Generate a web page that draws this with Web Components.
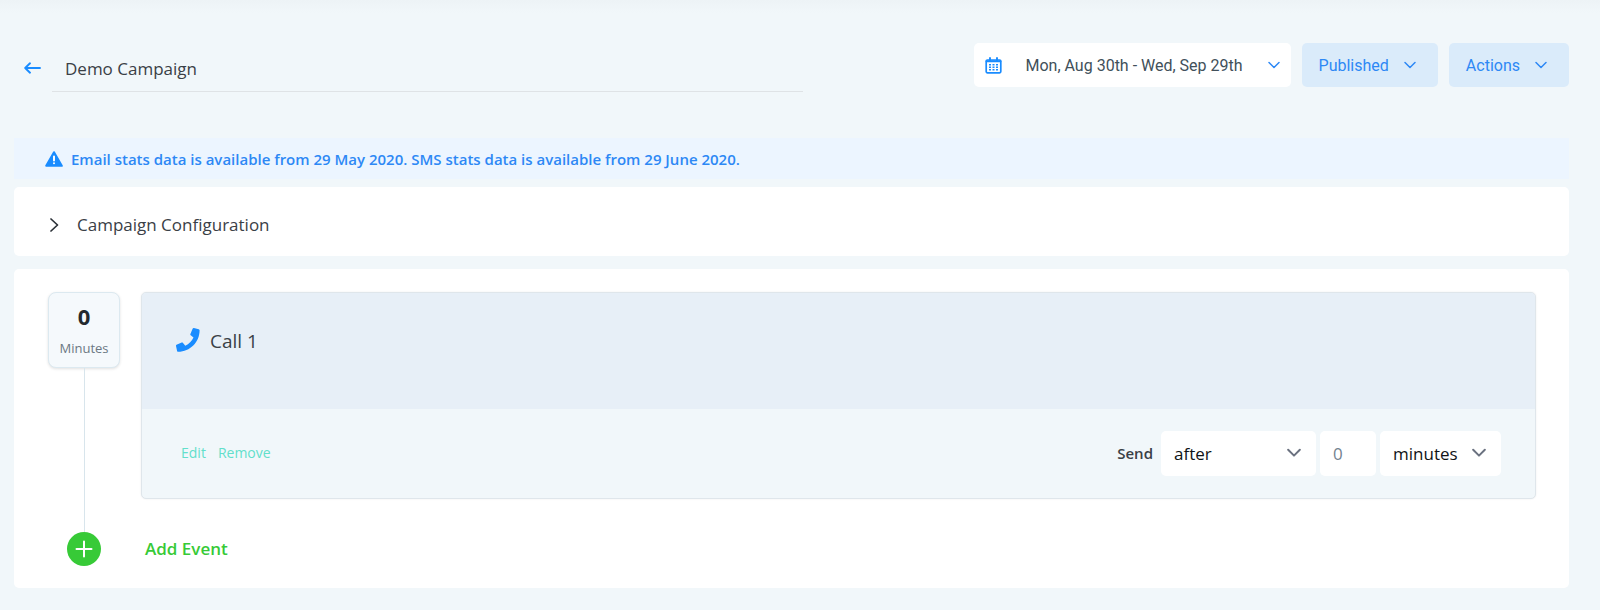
<!DOCTYPE html>
<html lang="en">
<head>
<meta charset="utf-8">
<meta name="viewport" content="width=device-width, initial-scale=1">
<title>Demo Campaign</title>
<style>
:root{--blue:#1a8cff;--blue-text:#2d88f5;--page:#f1f7fa;--ink:#3a4046;--green:#37ca37;--teal:#62dfcb;--ui:"Open Sans","Noto Sans",sans-serif;--roboto:Roboto,sans-serif}
html{background:var(--page)}
body{margin:0;font-family:var(--ui);color:var(--ink)}
</style>
</head>
<body>
<campaign-page>
  <campaign-header slot="header" name="Demo Campaign">
    <date-range>Mon, Aug 30th - Wed, Sep 29th</date-range>
    <menu-button>Published</menu-button>
    <menu-button>Actions</menu-button>
  </campaign-header>
  <info-alert>Email stats data is available from 29 May 2020. SMS stats data is available from 29 June 2020.</info-alert>
  <config-panel>Campaign Configuration</config-panel>
  <event-timeline>
    <delay-badge slot="delay" value="0">Minutes</delay-badge>
    <call-event>Call 1</call-event>
  </event-timeline>
</campaign-page>
<script>
const define = (name, html, setup) => customElements.define(name, class extends HTMLElement {
  constructor() {
    super();
    const t = document.createElement('template');
    t.innerHTML = `<style>:host,*{box-sizing:border-box}svg{display:block;flex:none;fill:none;stroke-linecap:round;stroke-linejoin:round}button,input,select{font:inherit;color:inherit;border:0;margin:0;padding:0;background:none}button{cursor:pointer}</style>${html}`;
    this.attachShadow({mode: 'open'}).append(t.content.cloneNode(true));
    if (setup) setup(this, this.shadowRoot);
  }
});

define('chevron-icon', `<style>:host{display:block;flex:none;width:12px}svg{width:100%;stroke-width:var(--chevron-stroke,1.5)}</style>
<svg viewBox="0 0 12 8" stroke="currentColor"><path d="M1 1.500 6 6.500 11 1.500"/></svg>`);

define('campaign-page', `<style>
:host{display:block;padding:0 31px 22px 14px;background:linear-gradient(#edf3f6,#f1f7fa 13px) no-repeat}
main{display:flex;flex-direction:column}
</style><slot name="header"></slot><main><slot></slot></main>`);

define('campaign-header', `<style>
:host{display:flex;justify-content:space-between;align-items:flex-start;padding:43px 0 46px}
.left{display:flex;align-items:center;flex:0 1 51%;padding-right:4px}
.back{display:block;width:38px;padding:0 10px}
.title{flex:1;min-width:0;height:49px;padding:2px 13px 0;border-bottom:1px solid #dfe3e6;font-size:17px;outline:0}
.actions{display:flex;gap:11px}
</style>
<div class="left">
<a class="back" href="#" aria-label="Back"><svg width="17" height="12" viewBox="0 0 17 12" stroke="#1a8cff" stroke-width="1.900"><path d="M16 6H1.500M6 1.300 1.200 6 6 10.700"/></svg></a>
<input class="title" aria-label="Campaign name">
</div>
<div class="actions"><slot></slot></div>`, (el, root) => {
  root.querySelector('.title').value = el.getAttribute('name');
});

define('date-range', `<style>
:host{display:block}
button{display:flex;align-items:center;height:44px;padding:0 11px;border-radius:5px;background:#fff;font-family:var(--roboto);font-size:16px;color:#41505a;white-space:nowrap}
.label{padding:0 25px 0 23px}
chevron-icon{color:var(--blue-text)}
</style>
<button type="button">
<svg width="17" height="17" viewBox="0 0 17 17"><rect x="1.200" y="3" width="14.600" height="12.800" rx="1.200" stroke="#1a8cff" stroke-width="1.700"/><path d="M1.500 4.200h14M5 1v3M12 1v3" stroke="#1a8cff" stroke-width="1.900"/><path d="M4 7.700h2M7.500 7.700h2M11 7.700h2M4 10.200h2M7.500 10.200h2M11 10.200h2M4 12.700h2M7.500 12.700h2M11 12.700h2" stroke="#1a8cff" stroke-width="1.400" stroke-linecap="butt"/></svg>
<span class="label"><slot></slot></span><chevron-icon></chevron-icon></button>`);

define('menu-button', `<style>
:host{display:block}
button{display:flex;align-items:center;gap:15px;height:44px;padding:0 22px 0 17px;border-radius:5px;background:#daebfa;font-family:var(--roboto);font-size:16px;color:var(--blue-text)}
</style><button type="button"><slot></slot><chevron-icon></chevron-icon></button>`);

define('info-alert', `<style>
:host{display:flex;align-items:center;gap:8px;min-height:41px;padding:0 31px;margin-bottom:8px;background:#ecf5ff;color:var(--blue-text);font-size:15px;line-height:20px;font-weight:600}
</style>
<svg width="18" height="16" viewBox="0 0 18 16"><path d="M9 1.200 16.800 14.800H1.200Z" fill="#1a8cff" stroke="#1a8cff" stroke-width="2"/><path d="M9 5.500v4M9 12.200v.1" stroke="#fff" stroke-width="2"/></svg>
<span><slot></slot></span>`);

define('config-panel', `<style>
:host{display:block;margin-bottom:13px;border-radius:5px;background:#fff}
button{display:flex;align-items:center;gap:18px;width:100%;min-height:69px;padding:6px 36px 0;font-size:17px;text-align:left}
</style>
<button type="button" aria-expanded="false"><svg width="9" height="14" viewBox="0 0 9 14" stroke="#2b3137" stroke-width="1.700"><path d="M1 1l6.500 6L1 13"/></svg><slot></slot></button>`);

define('event-timeline', `<style>
:host{display:grid;grid-template-columns:72px 1fr;column-gap:21px;padding:23px 33px 22px 34px;border-radius:5px;background:#fff}
.rail{display:flex;flex-direction:column;align-items:center}
.line{flex:1;width:1px;background:#d8e5ec}
.plus{display:grid;place-items:center;justify-self:center;width:34px;height:34px;border-radius:50%;background:var(--green)}
.text{justify-self:start;padding:0 4px;font-size:17px;line-height:24px;font-weight:600;color:var(--green)}
.body{padding-bottom:33px}
</style>
<div class="rail"><slot name="delay"></slot><span class="line"></span></div>
<div class="body"><slot></slot></div>
<button class="plus" type="button" aria-labelledby="add"><svg width="18" height="18" viewBox="0 0 18 18" stroke="#fff" stroke-width="2"><path d="M9 1.500v15M1.500 9h15"/></svg></button>
<button class="text" id="add" type="button">Add Event</button>`);

define('delay-badge', `<style>
:host{display:flex;flex-direction:column;align-items:center;width:72px;height:76px;padding:9px 0 0;border:1px solid #dce9f0;border-radius:8px;background:#f5f9fc;box-shadow:0 1px 3px #0000001f;text-align:center}
strong{font-size:22px;line-height:28px;font-weight:700;color:#24292e}
span{font-size:13px;line-height:20px;padding-top:8px;color:#6b7883}
</style><strong></strong><span><slot></slot></span>`, (el, root) => {
  root.querySelector('strong').textContent = el.getAttribute('value');
});

define('call-event', `<style>
:host{display:block;border:1px solid #dfe6eb;border-radius:5px;background:#f1f7fa;box-shadow:0 0 2px #00000014;overflow:hidden}
header{display:flex;align-items:flex-start;gap:10px;height:116px;padding:35px 34px;background:#e7eff7}
h2{margin:0;font-size:19px;line-height:26px;font-weight:400}
footer{display:flex;align-items:center;justify-content:space-between;height:89px;padding:0 34px 1px 39px}
nav{display:flex;gap:12px}
a{color:var(--teal);font-size:14px;line-height:20px;text-decoration:none}
.send{display:flex;align-items:center;gap:4px}
.send>label{padding-right:4px;font-size:15px;font-weight:600}
.pick{display:grid;align-items:center;color:#0f1316;font-size:17px}
.pick>*{grid-area:1/1}
select,input{width:100%;height:45px;padding:0 13px;border-radius:5px;background:#fff;appearance:none;outline:0}
.when{width:155px}.unit{width:121px}
input{width:56px;font-size:17px;color:#74838f}
chevron-icon{--chevron-stroke:1.7;justify-self:end;width:14px;margin-right:15px;color:#6b7280;pointer-events:none}
</style>
<header><svg width="24" height="24" viewBox="0 0 24 24"><path d="M22.700 1.200 17.900.1c-.5-.1-1 .1-1.300.6l-2.200 5.200c-.2.500-.1 1 .3 1.300l2.800 2.300a17.200 17.200 0 0 1-8.200 8.200l-2.300-2.800c-.3-.4-.9-.5-1.300-.3L.500 16.800c-.4.200-.7.800-.5 1.300l1.100 4.800c.1.500.6.900 1.100.9C14 23.800 23.600 14.200 23.600 2.300c0-.5-.4-1-.9-1.100Z" fill="#1a8cff"/></svg><h2><slot></slot></h2></header>
<footer><nav><a href="#">Edit</a><a href="#">Remove</a></nav>
<div class="send"><label for="when">Send</label>
<div class="pick when"><select id="when"><option>after</option></select><chevron-icon></chevron-icon></div>
<input value="0" inputmode="numeric" aria-label="Delay">
<div class="pick unit"><select aria-label="Delay unit"><option>minutes</option></select><chevron-icon></chevron-icon></div>
</div></footer>`);
</script>
</body>
</html>
